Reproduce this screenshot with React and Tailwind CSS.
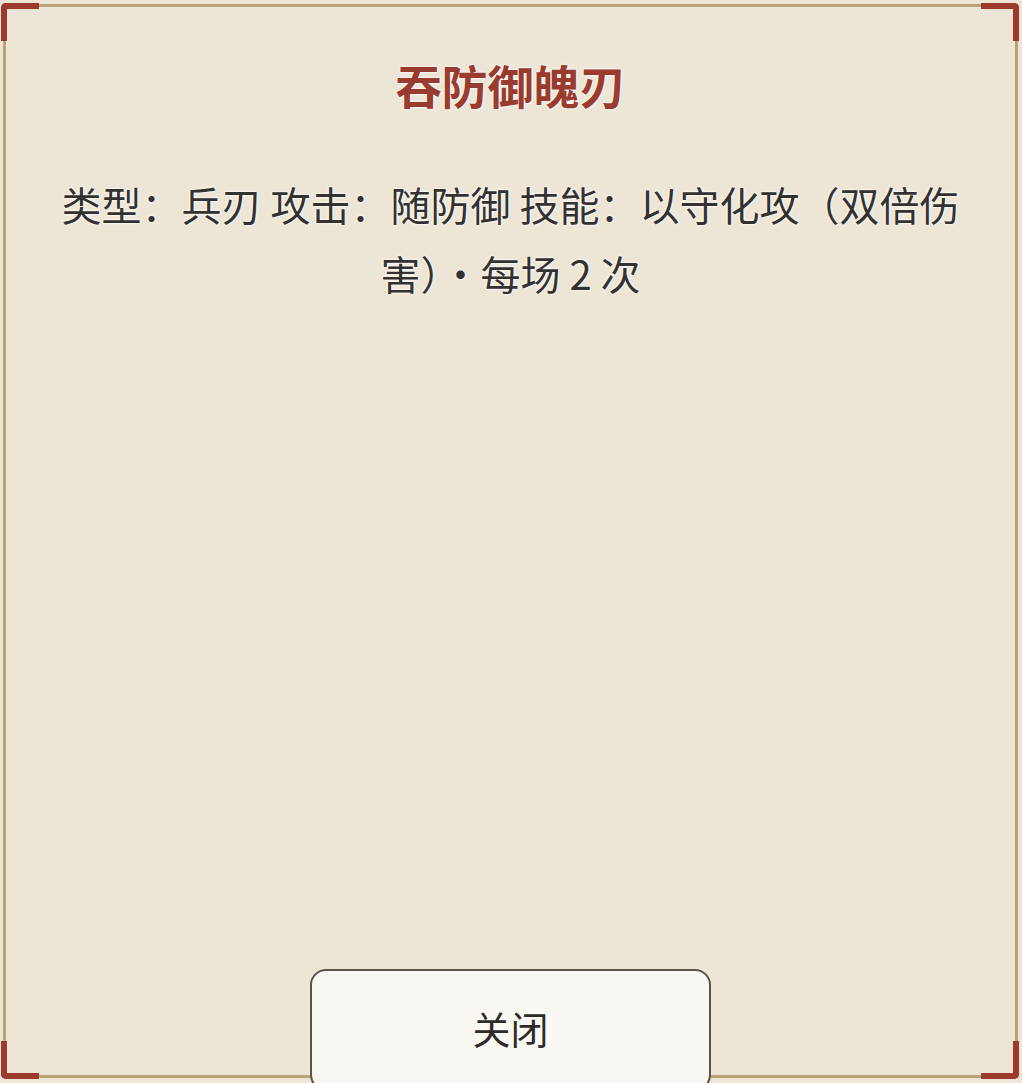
export default function App() {
  const cn = "[font-family:'Noto_Sans_CJK_SC','Noto_Sans',sans-serif]"
  const corner = 'absolute w-[38px] h-[38px] border-[#9c3a2e] pointer-events-none'
  return (
    <div className={`relative w-[1022px] h-[1083px] overflow-hidden bg-[#e6e3dd] ${cn}`}>
      {/* red corner brackets drawn over the frame */}
      <div className={`${corner} left-[1px] top-[3px] border-l-[6px] border-t-[6px] rounded-tl-[5px]`} />
      <div className={`${corner} right-[3px] top-[3px] border-r-[6px] border-t-[6px] rounded-tr-[5px]`} />
      <div className={`${corner} left-[1px] bottom-[4px] border-l-[6px] border-b-[6px] rounded-bl-[5px]`} />
      <div className={`${corner} right-[3px] bottom-[4px] border-r-[6px] border-b-[6px] rounded-br-[5px]`} />

      <div className="h-full pt-[4px] pl-[3px] pr-[4px] pb-[5px] bg-[#ede6d6]">
        <div className="h-full border-[3px] border-[#b9a273] flex flex-col items-center px-[44px]">
          <h1 className="mt-[49px] text-[46px] leading-[56px] font-bold text-[#9a3b2f] [text-shadow:0_0_3px_#fff,0_0_2px_#fff]">
            吞防御魄刃
          </h1>
          <p className="mt-[58px] text-center text-[40px] leading-[69px] text-[#333230] [text-shadow:0_0_3px_#fff,0_0_2px_#fff]">
            类型：兵刃 攻击：随防御 技能：以守化攻（双倍伤害）·每场 2 次
          </p>
          <button className="relative z-10 mt-auto mb-[-16px] w-[401px] h-[122px] shrink-0 rounded-[16px] border-2 border-[#5a554b] bg-[#f9f7f2] text-[38px] leading-[44px] pb-[4px] text-[#2e2b27] [text-shadow:0_0_2px_#fff]">
            关闭
          </button>
        </div>
      </div>
    </div>
  )
}
